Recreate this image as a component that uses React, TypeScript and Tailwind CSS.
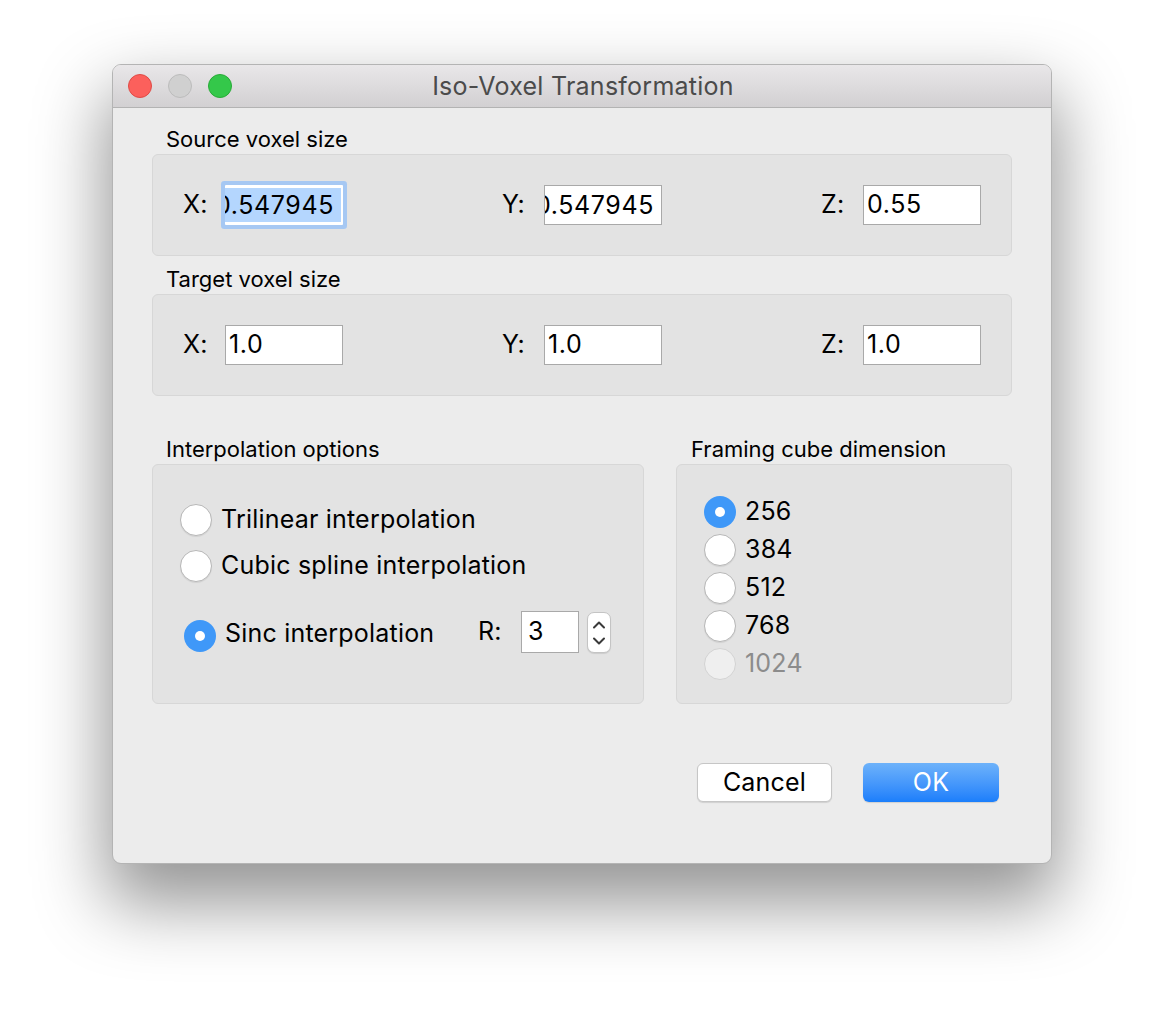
import React from "react";

function Light({ color, border }: { color: string; border: string }) {
  return <div className={`w-[24px] h-[24px] rounded-full border ${color} ${border}`}></div>;
}

function Field({
  value,
  focused = false,
  scrolled = false,
}: {
  value: string;
  focused?: boolean;
  scrolled?: boolean;
}) {
  if (scrolled) {
    return (
      <div
        className={`w-[118px] h-[40px] bg-white flex items-center justify-end overflow-hidden ${
          focused
            ? "rounded-[1px] shadow-[0_0_0_4px_#a6c8f3] pr-[2px]"
            : "border border-[#a9a9a9] pr-[7px]"
        }`}
      >
        <span
          className={`shrink-0 whitespace-nowrap text-[25px] tracking-[0.6px] leading-[34px] ${
            focused ? "bg-[#b4d6fe] pr-[7px]" : ""
          }`}
        >
          {value}
        </span>
      </div>
    );
  }
  return (
    <div className="w-[118px] h-[40px] bg-white border border-[#a9a9a9] flex items-center pl-[3px] text-[25px] tracking-[0.6px] overflow-hidden whitespace-nowrap">
      {value}
    </div>
  );
}

function Radio({ checked = false, disabled = false }: { checked?: boolean; disabled?: boolean }) {
  if (checked) {
    return (
      <div className="w-[32px] h-[32px] rounded-full bg-[#3f98f8] flex items-center justify-center shrink-0">
        <div className="w-[10px] h-[10px] rounded-full bg-white"></div>
      </div>
    );
  }
  if (disabled) {
    return <div className="w-[32px] h-[32px] rounded-full bg-[#efefef] border border-[#d3d3d3] shrink-0"></div>;
  }
  return (
    <div className="w-[32px] h-[32px] rounded-full bg-white border border-[#b7b7b7] shadow-[0_1px_1px_rgba(0,0,0,0.08)] shrink-0"></div>
  );
}

function AxisRow({ values }: { values: { v: string; focused?: boolean; scrolled?: boolean }[] }) {
  const labels = ["X:", "Y:", "Z:"];
  return (
    <div className="h-[102px] rounded-[6px] bg-[#e3e3e3] border border-[#d7d7d7] flex items-center justify-between px-[30px]">
      {values.map((f, i) => (
        <div key={i} className="flex items-center">
          <span className="w-[42px] text-[25px] tracking-[0.2px]">{labels[i]}</span>
          <Field value={f.v} focused={f.focused} scrolled={f.scrolled} />
        </div>
      ))}
    </div>
  );
}

function GroupLabel({ children }: { children: React.ReactNode }) {
  return <div className="h-[24px] leading-[24px] text-[22px] pl-[14px] text-black">{children}</div>;
}

export default function App() {
  return (
    <div className="w-[1164px] h-[1024px] bg-white pt-[64px] pl-[112px] font-[Inter,'Liberation_Sans',sans-serif] text-black">
      <div className="w-[940px] h-[800px] rounded-[9px] bg-[#ececec] border border-[#b4b4b4] shadow-[0_34px_70px_6px_rgba(0,0,0,0.42)] overflow-hidden flex flex-col">
        {/* title bar */}
        <div className="h-[43px] shrink-0 bg-linear-to-b from-[#e9e7e9] to-[#d2d0d2] border-b border-[#b3b3b3] grid grid-cols-[1fr_auto_1fr] items-center">
          <div className="flex items-center gap-[16px] pl-[15px]">
            <Light color="bg-[#fc605c]" border="border-[#df4b46]" />
            <Light color="bg-[#d0d0d0]" border="border-[#bcbcbc]" />
            <Light color="bg-[#34c84a]" border="border-[#28ab37]" />
          </div>
          <div className="text-[25px] tracking-[0.25px] text-[#4b4b4b] leading-none pl-[2px]">Iso-Voxel Transformation</div>
          <div></div>
        </div>

        <div className="flex flex-col px-[39px]">
          <div className="mt-[19px]">
            <GroupLabel>Source voxel size</GroupLabel>
          </div>
          <div className="mt-[3px]">
            <AxisRow
              values={[
                { v: "0.547945", focused: true, scrolled: true },
                { v: "0.547945", scrolled: true },
                { v: "0.55" },
              ]}
            />
          </div>

          <div className="mt-[11px]">
            <GroupLabel>Target voxel size</GroupLabel>
          </div>
          <div className="mt-[3px]">
            <AxisRow values={[{ v: "1.0" }, { v: "1.0" }, { v: "1.0" }]} />
          </div>

          <div className="mt-[41px] flex gap-[32px]">
            <div className="w-[492px] flex flex-col">
              <GroupLabel>Interpolation options</GroupLabel>
              <div className="mt-[3px] h-[240px] rounded-[6px] bg-[#e3e3e3] border border-[#d7d7d7] pl-[27px] pt-[39px] flex flex-col text-[25px] tracking-[0.2px]">
                <div className="h-[32px] flex items-center gap-[9px]">
                  <Radio />
                  <span>Trilinear interpolation</span>
                </div>
                <div className="mt-[14px] h-[32px] flex items-center gap-[9px]">
                  <Radio />
                  <span>Cubic spline interpolation</span>
                </div>
                <div className="mt-[29px] h-[42px] flex items-center pl-[4px]">
                  <div className="mt-[8px]">
                    <Radio checked />
                  </div>
                  <span className="w-[262px] pl-[9px] mt-[4px]">Sinc interpolation</span>
                  <span className="w-[43px]">R:</span>
                  <div className="w-[58px] h-[42px] bg-white border border-[#a9a9a9] flex items-center pl-[6px]">3</div>
                  <div className="ml-[8px] w-[24px] h-[41px] rounded-[7px] bg-white border border-[#c4c4c4] shadow-[0_1px_1px_rgba(0,0,0,0.1)]">
                    <svg width="22" height="39" viewBox="0 0 22 39" fill="none" stroke="#3a3a3a" strokeWidth="2" strokeLinecap="round" strokeLinejoin="round">
                      <path d="M6 14.5 L11 9.5 L16 14.5" />
                      <path d="M6 25.5 L11 30.5 L16 25.5" />
                    </svg>
                  </div>
                </div>
              </div>
            </div>

            <div className="w-[336px] flex flex-col">
              <div className="pl-[1px]">
                <GroupLabel>Framing cube dimension</GroupLabel>
              </div>
              <div className="mt-[3px] h-[240px] rounded-[6px] bg-[#e3e3e3] border border-[#d7d7d7] pl-[27px] pt-[31px] flex flex-col gap-[6px] text-[25px] tracking-[0.2px]">
                {["256", "384", "512", "768", "1024"].map((d, i) => (
                  <div key={d} className="h-[32px] flex items-center gap-[9px]">
                    <Radio checked={i === 0} disabled={i === 4} />
                    <span className={i === 4 ? "text-[#8c8c8c]" : ""}>{d}</span>
                  </div>
                ))}
              </div>
            </div>
          </div>

          <div className="mt-[59px] flex justify-end gap-[31px] pr-[13px]">
            <button className="w-[135px] h-[39px] rounded-[6px] bg-white border border-[#c6c6c6] shadow-[0_1px_1px_rgba(0,0,0,0.12)] text-[25px] tracking-[0.2px] text-black">
              Cancel
            </button>
            <button className="w-[136px] h-[39px] rounded-[6px] bg-linear-to-b from-[#6db2fa] to-[#1a7efb] text-[25px] tracking-[0.2px] text-white shadow-[0_1px_1px_rgba(0,0,0,0.12)]">
              OK
            </button>
          </div>
        </div>
      </div>
    </div>
  );
}
